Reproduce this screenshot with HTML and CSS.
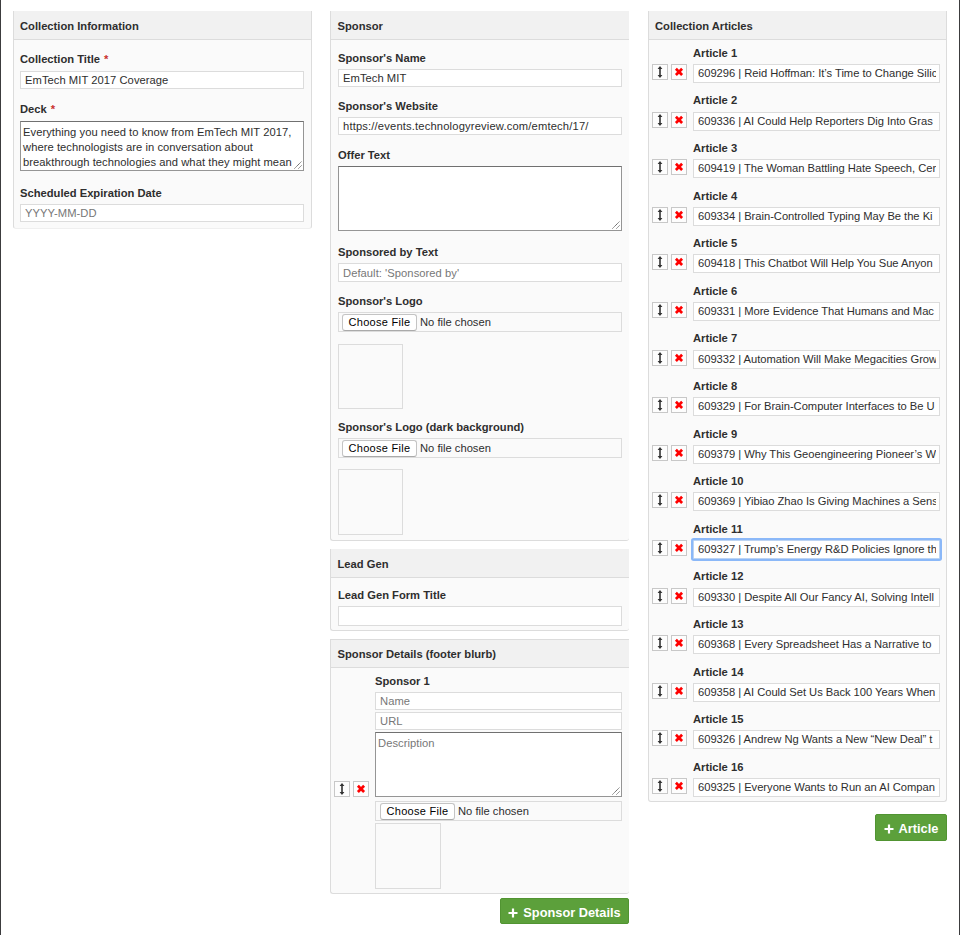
FILE: index.html
```html
<!DOCTYPE html>
<html lang="en">
<head>
<meta charset="utf-8">
<title>Collection</title>
<link rel="stylesheet" href="styles.css">
</head>
<body>
<svg class="defs" aria-hidden="true">
  <symbol id="move" viewBox="0 0 14 14"><path d="M7 1 9.400 4H7.800v6h1.600L7 13 4.600 10h1.600V4H4.600z" fill="#333"/></symbol>
  <symbol id="cross" viewBox="0 0 14 14"><path d="M3.900 3.800l6.200 6.200M10.100 3.800l-6.200 6.200" stroke="#f00" stroke-width="2.700"/></symbol>
  <symbol id="grip" viewBox="0 0 10 10"><path d="M1.500 8.500l7-7M5.500 8.500l3-3" stroke="#444" stroke-width="0.900" stroke-dasharray="1.200 .5"/></symbol>
  <symbol id="plus" viewBox="0 0 10 10"><path d="M5 0.500v9M.5 5h9" stroke="#fff" stroke-width="2.200"/></symbol>
</svg>
<main class="page">
  <section class="column">
    <div class="panel info">
      <h2>Collection Information</h2>
      <div class="body">
        <div class="row title"><label>Collection Title <b class="req">*</b></label><div class="input"><span>EmTech MIT 2017 Coverage</span></div></div>
        <div class="row deck"><label>Deck <b class="req">*</b></label><div class="area small"><span>Everything you need to know from EmTech MIT 2017,<br>where technologists are in conversation about<br>breakthrough technologies and what they might mean</span><svg class="grip"><use href="#grip"/></svg></div></div>
        <div class="row"><label>Scheduled Expiration Date</label><div class="input hint"><span>YYYY-MM-DD</span></div></div>
      </div>
    </div>
  </section>

  <section class="column middle">
    <div class="panel sponsor">
      <h2>Sponsor</h2>
      <div class="body">
        <div class="row name"><label>Sponsor's Name</label><div class="input"><span>EmTech MIT</span></div></div>
        <div class="row site"><label>Sponsor's Website</label><div class="input url"><span>https://events.technologyreview.com/emtech/17/</span></div></div>
        <div class="row offer"><label>Offer Text</label><div class="area"><svg class="grip"><use href="#grip"/></svg></div></div>
        <div class="row by"><label>Sponsored by Text</label><div class="input tall hint"><span>Default: 'Sponsored by'</span></div></div>
        <div class="row logo"><label>Sponsor's Logo</label><div class="file"><button>Choose File</button><span>No file chosen</span></div><div class="preview"></div></div>
        <div class="row dark"><label>Sponsor's Logo (dark background)</label><div class="file"><button>Choose File</button><span>No file chosen</span></div><div class="preview"></div></div>
      </div>
    </div>
    <div class="panel lead">
      <h2>Lead Gen</h2>
      <div class="body"><div class="row"><label>Lead Gen Form Title</label><div class="input xtall"></div></div></div>
    </div>
    <div class="panel details">
      <h2>Sponsor Details (footer blurb)</h2>
      <div class="item">
        <div class="tools"><i class="tool"><svg><use href="#move"/></svg></i><i class="tool"><svg><use href="#cross"/></svg></i></div>
        <div class="fields">
          <label>Sponsor 1</label>
          <div class="input hint"><span>Name</span></div>
          <div class="input hint"><span>URL</span></div>
          <div class="area hint"><span>Description</span><svg class="grip"><use href="#grip"/></svg></div>
          <div class="file"><button>Choose File</button><span>No file chosen</span></div>
          <div class="preview"></div>
        </div>
      </div>
    </div>
    <button class="add add-details"><svg><use href="#plus"/></svg><span>Sponsor Details</span></button>
  </section>

  <section class="column">
    <div class="panel articles">
      <h2>Collection Articles</h2>
      <div class="list" id="list"></div>
    </div>
    <button class="add add-article"><svg><use href="#plus"/></svg><span>Article</span></button>
  </section>
</main>
<script src="articles.js"></script>
</body>
</html>
```
FILE: articles.js
```js
const articles = [
  "609296 | Reid Hoffman: It’s Time to Change Silic",
  "609336 | AI Could Help Reporters Dig Into Gras",
  "609419 | The Woman Battling Hate Speech, Cen",
  "609334 | Brain-Controlled Typing May Be the Ki",
  "609418 | This Chatbot Will Help You Sue Anyon",
  "609331 | More Evidence That Humans and Mac",
  "609332 | Automation Will Make Megacities Grow",
  "609329 | For Brain-Computer Interfaces to Be U",
  "609379 | Why This Geoengineering Pioneer’s Wo",
  "609369 | Yibiao Zhao Is Giving Machines a Sens",
  "609327 | Trump’s Energy R&D Policies Ignore th",
  "609330 | Despite All Our Fancy AI, Solving Intell",
  "609368 | Every Spreadsheet Has a Narrative to",
  "609358 | AI Could Set Us Back 100 Years When",
  "609326 | Andrew Ng Wants a New “New Deal” t",
  "609325 | Everyone Wants to Run an AI Compan"
];
const list = document.getElementById("list");
articles.forEach((text, i) => {
  const el = document.createElement("div");
  el.className = "article" + (i === 10 ? " focused" : "");
  el.innerHTML = '<div class="tools"><i class="tool"><svg><use href="#move"/></svg></i><i class="tool"><svg><use href="#cross"/></svg></i></div>' +
    '<div class="fields"><label>Article ' + (i + 1) + '</label><div class="input"><span></span></div></div>';
  el.querySelector("span").textContent = text;
  list.appendChild(el);
});
```
FILE: styles.css
```css
* { box-sizing: border-box; }
body { margin: 0; background: #fff; color: #2e2e2e; font: 11.2px/15px "Liberation Sans", Arial, sans-serif; }
.defs { position: absolute; width: 0; height: 0; }
.page { height: 935px; overflow: hidden; padding: 11px 12px 0; border-left: 1px solid #3c3c3e; border-right: 1px solid #3c3c3e; display: grid; grid-template-columns: 299px 300px 299px; column-gap: 18px; align-items: start; }
.column { display: flex; flex-direction: column; }
.middle { width: 299px; }
.panel { background: #fafafa; border: 1px solid #dcdcdc; border-top: 0; border-radius: 0 0 3px 3px; }
.middle .panel { border-right: 0; }
h2 { margin: 0; height: 29px; padding: 0 6px; background: #f1f1f1; border-bottom: 1px solid #dcdcdc; font-size: 11.2px; line-height: 30px; white-space: nowrap; }
label { display: block; font-weight: bold; height: 15px; line-height: 15px; white-space: nowrap; }
.req { color: #c9302c; margin-left: 1px; }
.body { padding: 0 7px 0 6px; }
.middle .body { padding-left: 7px; }
.middle h2 { padding-left: 6.5px; }
.input, .area { background: #fff; border: 1px solid #dcdcdc; letter-spacing: .05px; }
.url { letter-spacing: .16px; }
.input { height: 18px; padding: 0 4px; line-height: 17px; }
.input span { display: block; overflow: hidden; white-space: nowrap; height: 16px; }
.area { position: relative; height: 65px; border-color: #707070 #959595 #959595; padding: 3px 2px; white-space: nowrap; }
.area.small { height: 50px; }
.hint { color: #777; }
.grip { position: absolute; right: 0; bottom: 0; width: 10px; height: 10px; }
.file { height: 20px; border: 1px solid #dcdcdc; display: flex; align-items: center; padding-left: 3px; gap: 3px; white-space: nowrap; }
.file button { width: 75px; height: 17px; padding: 0; border: 1px solid #c4c4c4; border-bottom-color: #aaa; border-radius: 3px; background: #fff; color: #000; font: 11px/14px "Liberation Sans", Arial, sans-serif; letter-spacing: .3px; }
.preview { width: 65px; height: 65px; border: 1px solid #dcdcdc; }

.info { height: 218px; border-bottom-color: #efefef; }
.title { padding-top: 12px; }
.title .input { margin-top: 4px; }
.deck { padding-top: 13px; }
.deck .area { margin-top: 4px; }
.deck + .row { padding-top: 15px; }
.deck + .row .input { margin-top: 3px; }

.sponsor { height: 530px; }
.name { padding-top: 11px; }
.sponsor .row > label { margin-bottom: 3px; }
.site { padding-top: 12px; }
.offer { padding-top: 13px; }
.by { padding-top: 14px; }
.tall { height: 19px; line-height: 18px; }
.logo { padding-top: 12px; }
.logo .preview { margin-top: 12px; }
.dark { padding-top: 11px; }
.dark .preview { margin-top: 11px; height: 66px; }

.lead { margin-top: 8px; height: 82px; }
.lead .row { padding-top: 10px; }
.xtall { height: 20px; margin-top: 3px; }
.details { margin-top: 8px; height: 255px; border-top: 1px solid #dcdcdc; }
.details h2 { height: 28px; line-height: 29px; }

.item { display: flex; }
.tools { display: flex; gap: 3px; flex: none; }
.tool { width: 16px; height: 16px; border: 1px solid #c8c8c8; background: #fdfdfd; }
.tool svg { display: block; width: 14px; height: 14px; }
.item .tools { width: 44px; padding: 113px 0 0 3px; }
.fields { flex: 1; min-width: 0; }
.item .fields { padding: 6px 7px 0 0; }
.item label { margin-bottom: 3px; }
.item .input { margin-bottom: 2px; }
.item .file { margin: 4px 0 2px; padding-left: 4px; }
.item .preview { width: 66px; height: 66px; }

.articles { height: 791px; }
.article { height: 47.6px; display: flex; }
.article .tools { width: 44px; padding: 24px 0 0 3px; }
.article .fields { padding: 5.8px 6px 0 0; }
.article .input { height: 19px; margin-top: 3.2px; line-height: 17px; letter-spacing: -.03px; }
.article .input span { margin-right: -1px; }
.focused .input { border-color: #bcd4f3; box-shadow: 0 0 0 2px #8bb8f8; border-radius: 1px; }

.add { align-self: flex-end; height: 27px; padding: 0; border: 1px solid #519432; border-radius: 2px; background: #5ca03b; color: #fff; display: flex; align-items: center; justify-content: center; gap: 5px; font: bold 12.8px/27px "Liberation Sans", Arial, sans-serif; white-space: nowrap; }
.add svg { width: 10px; height: 10px; margin-top: 3px; }
.add span { margin-top: 1px; }
.add-details { width: 129px; height: 26px; margin-top: 4px; }
.add-details span { margin-top: 3px; }
.add-article { width: 72px; margin-top: 12px; }
```
